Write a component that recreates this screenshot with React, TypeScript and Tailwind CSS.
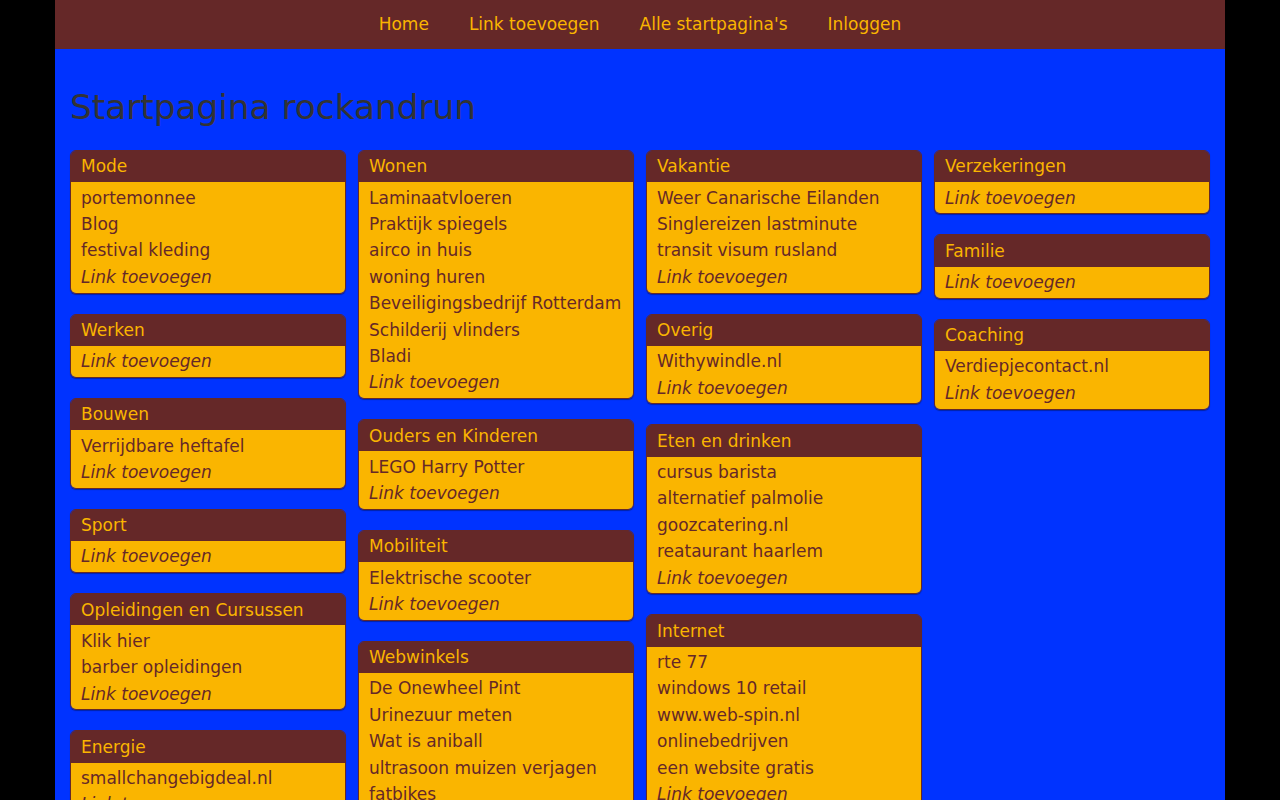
import React from "react";

type Block = { title: string; links: string[] };

const columns: Block[][] = [
  [
    { title: "Mode", links: ["portemonnee", "Blog", "festival kleding"] },
    { title: "Werken", links: [] },
    { title: "Bouwen", links: ["Verrijdbare heftafel"] },
    { title: "Sport", links: [] },
    { title: "Opleidingen en Cursussen", links: ["Klik hier", "barber opleidingen"] },
    { title: "Energie", links: ["smallchangebigdeal.nl"] },
  ],
  [
    {
      title: "Wonen",
      links: [
        "Laminaatvloeren",
        "Praktijk spiegels",
        "airco in huis",
        "woning huren",
        "Beveiligingsbedrijf Rotterdam",
        "Schilderij vlinders",
        "Bladi",
      ],
    },
    { title: "Ouders en Kinderen", links: ["LEGO Harry Potter"] },
    { title: "Mobiliteit", links: ["Elektrische scooter"] },
    {
      title: "Webwinkels",
      links: [
        "De Onewheel Pint",
        "Urinezuur meten",
        "Wat is aniball",
        "ultrasoon muizen verjagen",
        "fatbikes",
      ],
    },
  ],
  [
    {
      title: "Vakantie",
      links: ["Weer Canarische Eilanden", "Singlereizen lastminute", "transit visum rusland"],
    },
    { title: "Overig", links: ["Withywindle.nl"] },
    {
      title: "Eten en drinken",
      links: ["cursus barista", "alternatief palmolie", "goozcatering.nl", "reataurant haarlem"],
    },
    {
      title: "Internet",
      links: ["rte 77", "windows 10 retail", "www.web-spin.nl", "onlinebedrijven", "een website gratis"],
    },
  ],
  [
    { title: "Verzekeringen", links: [] },
    { title: "Familie", links: [] },
    { title: "Coaching", links: ["Verdiepjecontact.nl"] },
  ],
];

const nav = ["Home", "Link toevoegen", "Alle startpagina's", "Inloggen"];

function Card({ block }: { block: Block }) {
  return (
    <div className="rounded-[6px] border border-[#652828] overflow-hidden shadow-[0_1px_1px_rgba(0,0,0,0.35)]">
      <div className="bg-[#652828] text-[#fab500] px-[10px] py-[2.4px] leading-[26.4px]">{block.title}</div>
      <div className="bg-[#fab500] text-[#652828] px-[10px] py-[2.4px] leading-[26.4px]">
        {block.links.map((l) => (
          <div key={l} className="whitespace-nowrap">
            {l}
          </div>
        ))}
        <div className="italic">Link toevoegen</div>
      </div>
    </div>
  );
}

export default function App() {
  return (
    <div
      className="min-h-screen bg-black text-[17px]"
      style={{ fontFamily: '"DejaVu Sans", Verdana, sans-serif' }}
    >
      <div className="mx-auto w-[1170px] min-h-screen bg-[#0033ff]">
        <nav className="h-[49px] bg-[#652828] flex justify-center items-center">
          {nav.map((n) => (
            <a key={n} href="#" className="px-[20px] text-[#fab500] leading-[49px]">
              {n}
            </a>
          ))}
        </nav>
        <div className="px-[15px] pb-10">
          <h1 className="text-[34.3px] leading-[40px] text-[#333333] pt-[38px] pb-[23px]">
            Startpagina rockandrun
          </h1>
          <div className="grid grid-cols-4 gap-x-[12px] items-start">
            {columns.map((col, i) => (
              <div key={i} className="flex flex-col gap-[20px]">
                {col.map((b) => (
                  <Card key={b.title} block={b} />
                ))}
              </div>
            ))}
          </div>
        </div>
      </div>
    </div>
  );
}
